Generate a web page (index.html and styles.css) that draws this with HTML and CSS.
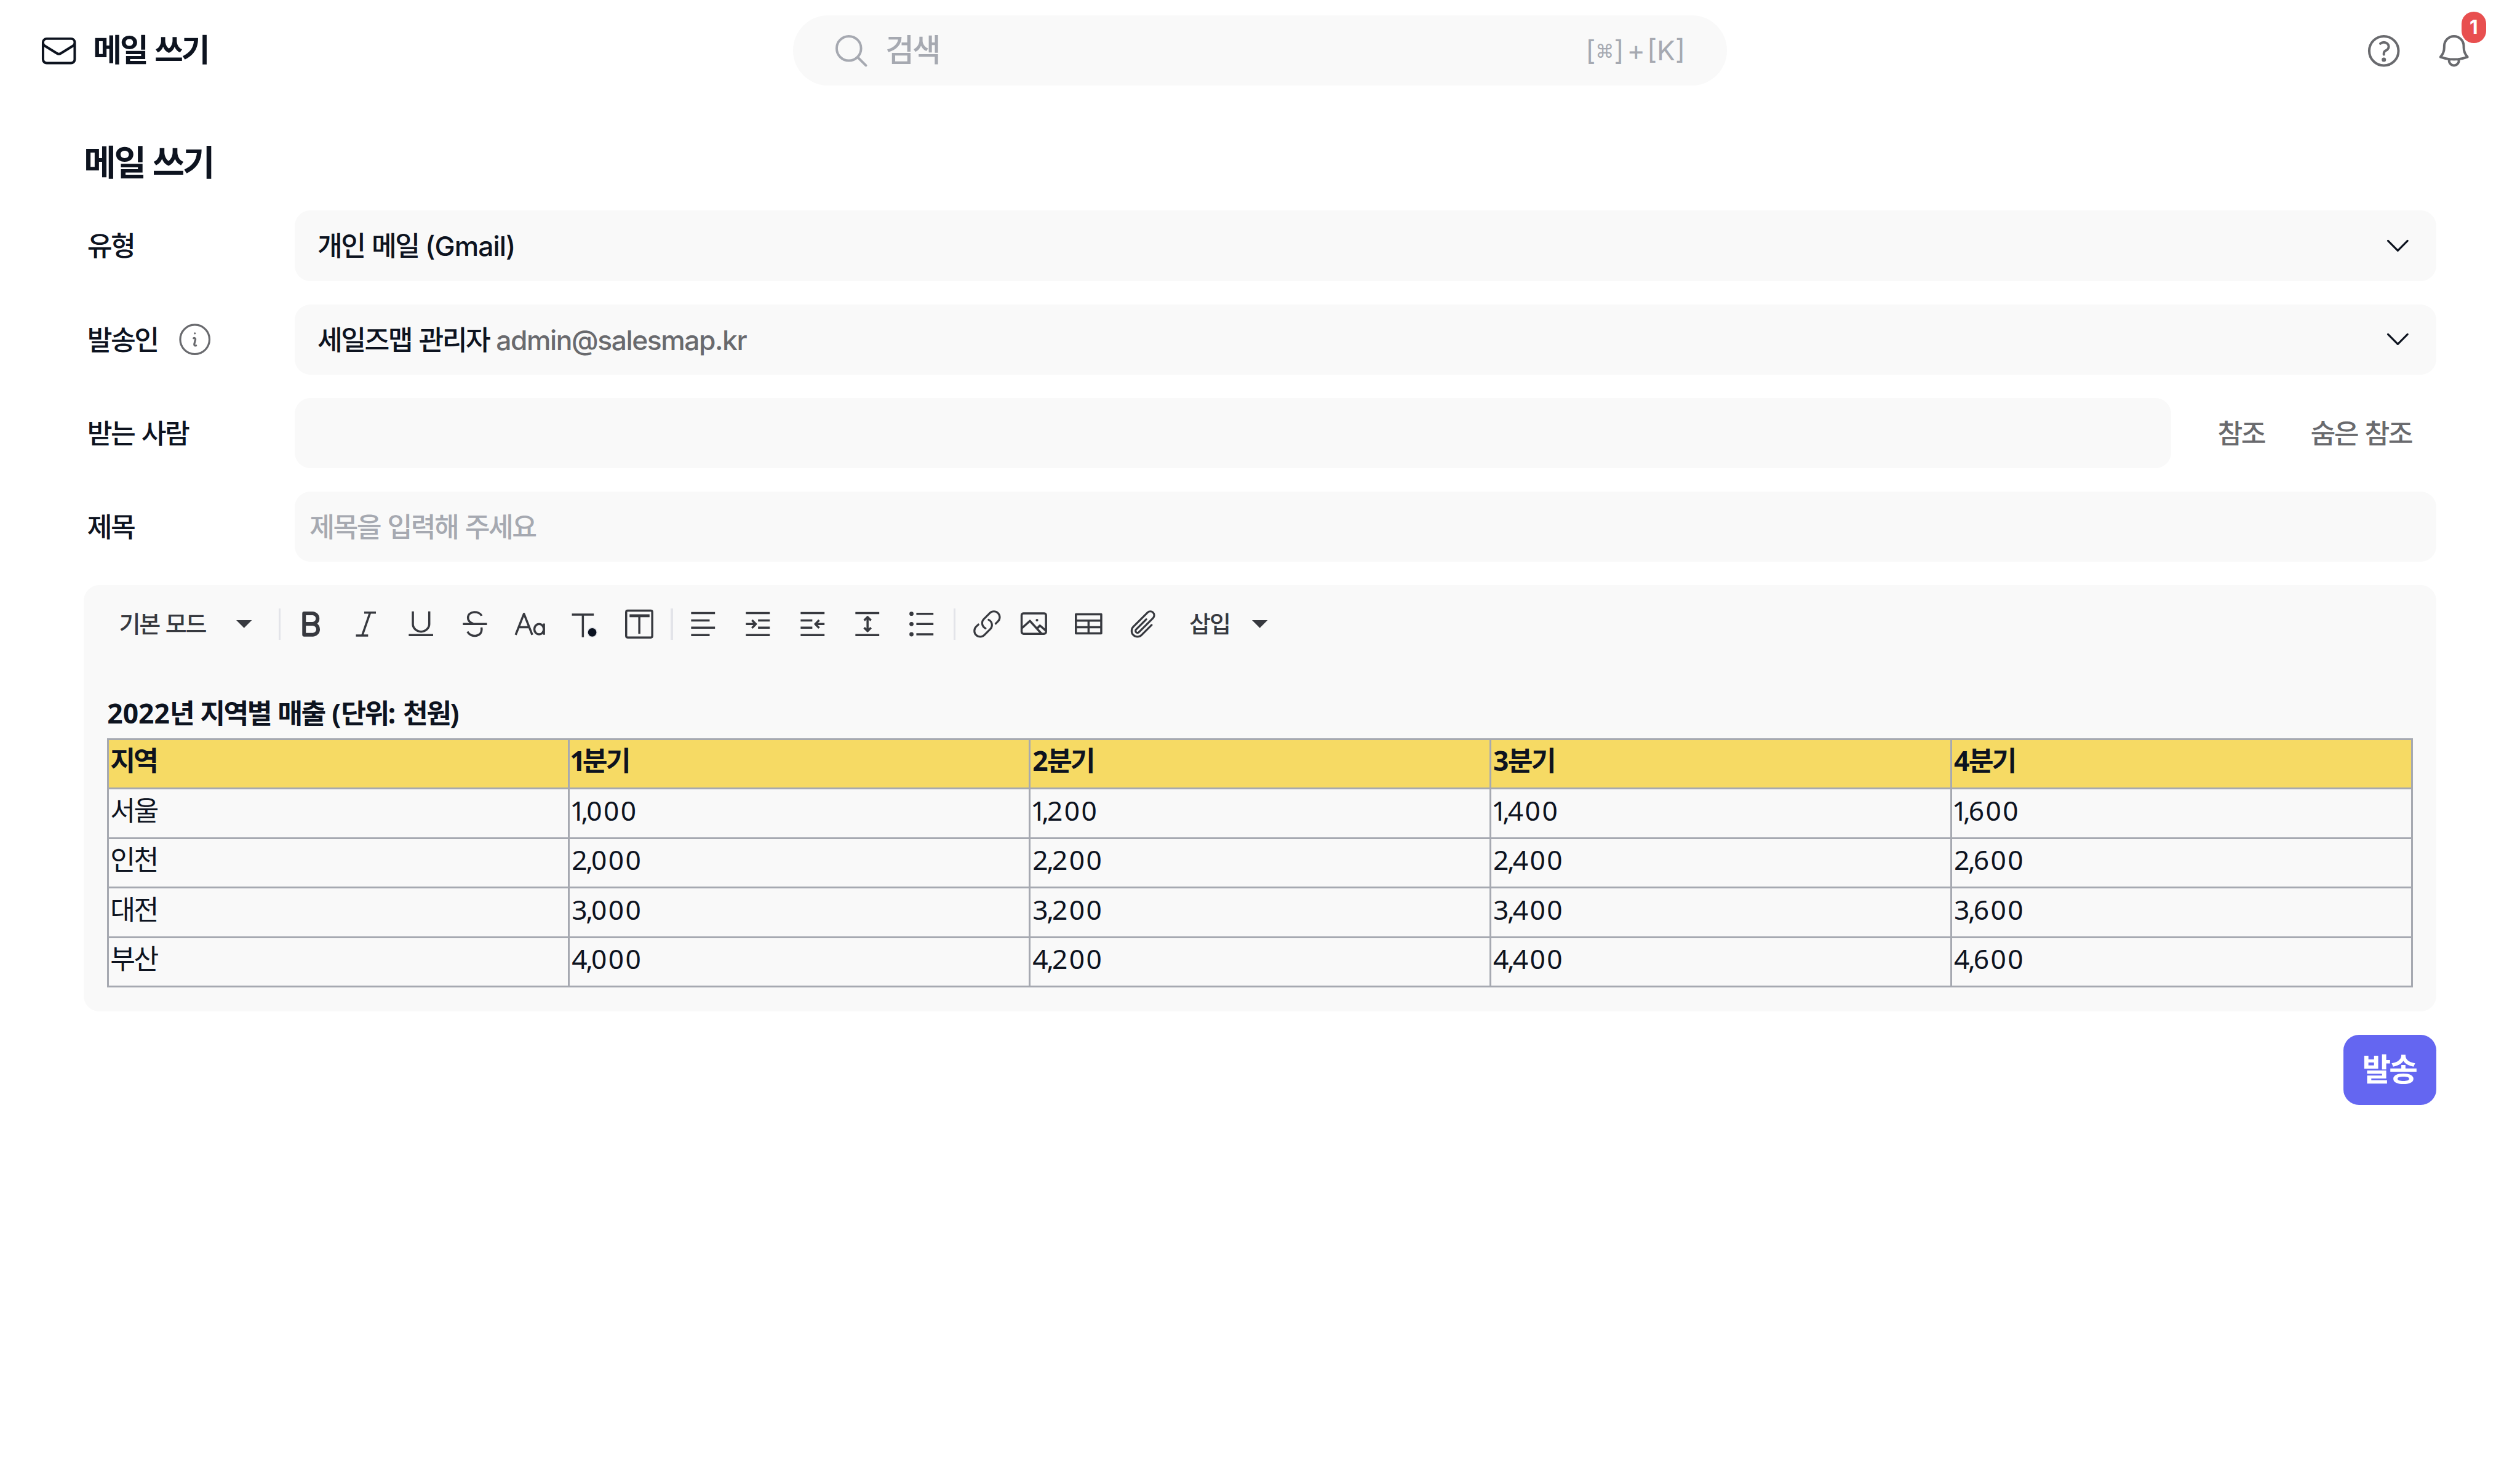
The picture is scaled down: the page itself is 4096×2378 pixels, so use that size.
FILE: index.html
```html
<!DOCTYPE html>
<html lang="ko">
<head>
<meta charset="utf-8">
<title>메일 쓰기</title>
<link rel="stylesheet" href="styles.css">
</head>
<body>
<header class="topbar">
  <div class="page-name">
    <svg class="icon-lg" viewBox="0 0 24 24"><path d="M21.75 6.75v10.5a2.25 2.25 0 0 1-2.25 2.25h-15a2.25 2.25 0 0 1-2.25-2.25V6.75m19.5 0A2.25 2.25 0 0 0 19.5 4.5h-15a2.25 2.25 0 0 0-2.25 2.25m19.5 0v.243a2.25 2.25 0 0 1-1.07 1.916l-7.5 4.615a2.25 2.25 0 0 1-2.36 0L3.32 8.91a2.25 2.25 0 0 1-1.07-1.916V6.75"/></svg>
    <span class="ko">메일 쓰기</span>
  </div>
  <div class="search">
    <svg class="icon-lg" viewBox="0 0 24 24"><path d="m21 21-5.197-5.197m0 0A7.5 7.5 0 1 0 5.196 5.196a7.5 7.5 0 0 0 10.607 10.607Z"/></svg>
    <span class="search-text ko">검색</span>
    <span class="shortcut">[<span class="cmd">⌘</span>]<span class="plus">+</span>[K]</span>
  </div>
  <div class="top-actions">
    <svg class="icon-lg" viewBox="0 0 24 24"><path d="M9.879 7.519c1.171-1.025 3.071-1.025 4.242 0 1.172 1.025 1.172 2.687 0 3.712-.203.179-.43.326-.67.442-.745.361-1.45.999-1.45 1.827v.75M21 12a9 9 0 1 1-18 0 9 9 0 0 1 18 0Z"/><circle class="fill" cx="12" cy="17.4" r="1.35"/></svg>
    <div class="bell">
      <svg class="icon-lg" viewBox="0 0 24 24"><path d="M14.857 17.082a23.848 23.848 0 0 0 5.454-1.31A8.967 8.967 0 0 1 18 9.75V9A6 6 0 0 0 6 9v.75a8.967 8.967 0 0 1-2.312 6.022c1.733.64 3.56 1.085 5.455 1.31m5.714 0a24.255 24.255 0 0 1-5.714 0m5.714 0a3 3 0 1 1-5.714 0"/></svg>
      <span class="badge">1</span>
    </div>
  </div>
</header>

<main class="compose">
  <h1 class="title ko">메일 쓰기</h1>
  <div class="rows">
    <div class="row">
      <div class="label ko">유형</div>
      <div class="field select">
        <span class="value"><span class="ko">개인 메일</span> <span class="kind">(Gmail)</span></span>
        <svg class="icon-sm" viewBox="0 0 24 24"><path d="m19.5 8.25-7.5 7.5-7.5-7.5"/></svg>
      </div>
    </div>
    <div class="row">
      <div class="label"><span class="ko">발송인</span>
        <svg class="icon-lg info" viewBox="0 0 24 24"><path d="m11.25 11.25.041-.02a.75.75 0 0 1 1.063.852l-.708 2.836a.75.75 0 0 0 1.063.853l.041-.021M21 12a9 9 0 1 1-18 0 9 9 0 0 1 18 0Zm-9-3.75h.008v.008H12V8.25Z"/></svg>
      </div>
      <div class="field select">
        <span class="value"><span class="ko">세일즈맵 관리자</span> <span class="email">admin@salesmap.kr</span></span>
        <svg class="icon-sm" viewBox="0 0 24 24"><path d="m19.5 8.25-7.5 7.5-7.5-7.5"/></svg>
      </div>
    </div>
    <div class="row">
      <div class="label ko">받는 사람</div>
      <div class="field"></div>
      <div class="cc ko"><span>참조</span><span>숨은 참조</span></div>
    </div>
    <div class="row">
      <div class="label ko">제목</div>
      <div class="field placeholder ko">제목을 입력해 주세요</div>
    </div>
  </div>

  <section class="editor">
    <div class="toolbar">
      <span class="mode ko">기본 모드</span>
      <svg class="caret" viewBox="0 0 32 16"><path d="M0 0h32L16 16z"/></svg>
      <i class="sep"></i>
      <div class="tools format">
        <svg viewBox="0 0 64 64"><path class="bold" d="M18 10h17a10.5 10.5 0 0 1 0 21.5H18zM18 31.500h17.500a11.200 11.200 0 0 1 0 22.500H18z"/></svg>
        <svg viewBox="0 0 64 64"><path d="M29 8.500h24M12 55.500h25M41 9L25 55"/></svg>
        <svg viewBox="0 0 64 64"><path d="M16.500 6v26a16.800 15.500 0 0 0 33.600 0V6M8 54.500h50"/></svg>
        <svg viewBox="0 0 64 64"><path d="M46.500 15C42 4.500 18.500 4.500 18.500 19c0 6 4 10 11 12.500M46 39c4.500 20-22.500 22-28.500 8.500M8 32h49.500"/></svg>
        <svg viewBox="0 0 64 64"><path d="M4 54l17-43 17 43M10.500 38.500h21M62 31v23"/><ellipse cx="52" cy="42.500" rx="9.700" ry="10.500"/></svg>
        <svg viewBox="0 0 64 64"><path d="M7 12.500h45M29.500 12.500V59"/><circle class="dot" cx="48.700" cy="49" r="9.700"/></svg>
        <svg viewBox="0 0 64 64"><rect x="6" y="4.500" width="53.500" height="55" rx="3"/><path d="M33 15v37"/><path class="thick" d="M13 15h41"/></svg>
      </div>
      <i class="sep"></i>
      <div class="tools format">
        <svg viewBox="0 0 64 64"><path d="M8 9.500h49M8 24.500h38M8 39.500h49M8 54.500h38"/></svg>
        <svg viewBox="0 0 64 64"><path d="M8 9.500h49M33 24.500h24M33 39.500h24M8 54.500h49M8 32h20M20.500 24l8 8-8 8"/></svg>
        <svg viewBox="0 0 64 64"><path d="M8 9.500h49M8 24.500h24M8 39.500h24M8 54.500h49M57 32H38M46 24l-8 8 8 8"/></svg>
        <svg viewBox="0 0 64 64"><path d="M8 9.500h49M8 54.500h49M33 19v26M26 24.500l7-7 7 7M26 39.500l7 7 7-7"/></svg>
        <svg viewBox="0 0 64 64"><path d="M22 11h35M22 32h35M22 53h35"/><g class="fill"><circle cx="12" cy="11" r="4.300"/><circle cx="12" cy="32" r="4.300"/><circle cx="12" cy="53" r="4.300"/></g></svg>
      </div>
      <i class="sep"></i>
      <div class="tools insert">
        <svg class="thin" viewBox="0 0 24 24"><path d="M13.190 8.688a4.500 4.500 0 0 1 1.242 7.244l-4.500 4.500a4.500 4.500 0 0 1-6.364-6.364l1.757-1.757m13.350-.622 1.757-1.757a4.500 4.500 0 0 0-6.364-6.364l-4.500 4.500a4.500 4.500 0 0 0 1.242 7.244"/></svg>
        <svg viewBox="0 0 64 64"><rect x="7" y="10" width="50" height="42" rx="4"/><path d="M8 40l16-14.500L48 52M39 41l5.500-6L56 45"/><circle class="fill" cx="38.500" cy="24" r="2.700"/></svg>
        <svg viewBox="0 0 64 64"><path d="M6 12h52v39H6zM6 25h52M6 38.500h52M32 25v26"/></svg>
        <svg class="thin" viewBox="0 0 24 24"><path d="m18.375 12.739-7.693 7.693a4.500 4.500 0 0 1-6.364-6.364l10.940-10.940A3 3 0 1 1 19.500 7.372L8.552 18.320m5.699-9.941-7.810 7.810a1.500 1.500 0 0 0 2.112 2.130"/></svg>
      </div>
      <span class="mode insert-label ko">삽입</span>
      <svg class="caret insert-caret" viewBox="0 0 32 16"><path d="M0 0h32L16 16z"/></svg>
    </div>
    <div class="body">
      <p class="caption">2022<span class="ko">년 지역별 매출</span> (<span class="ko">단위</span>: <span class="ko">천원</span>)</p>
      <table class="sales">
        <thead>
          <tr><th><span class="ko">지역</span></th><th><span class="one">1</span><span class="ko">분기</span></th><th>2<span class="ko">분기</span></th><th>3<span class="ko">분기</span></th><th>4<span class="ko">분기</span></th></tr>
        </thead>
        <tbody>
          <tr><td><span class="ko">서울</span></td><td><span class="k one">1</span><span class="c">,</span>000</td><td><span class="k one">1</span><span class="c">,</span>200</td><td><span class="k one">1</span><span class="c">,</span>400</td><td><span class="k one">1</span><span class="c">,</span>600</td></tr>
          <tr><td><span class="ko">인천</span></td><td><span class="k">2</span><span class="c">,</span>000</td><td><span class="k">2</span><span class="c">,</span>200</td><td><span class="k">2</span><span class="c">,</span>400</td><td><span class="k">2</span><span class="c">,</span>600</td></tr>
          <tr><td><span class="ko">대전</span></td><td><span class="k">3</span><span class="c">,</span>000</td><td><span class="k">3</span><span class="c">,</span>200</td><td><span class="k">3</span><span class="c">,</span>400</td><td><span class="k">3</span><span class="c">,</span>600</td></tr>
          <tr><td><span class="ko">부산</span></td><td><span class="k">4</span><span class="c">,</span>000</td><td><span class="k">4</span><span class="c">,</span>200</td><td><span class="k">4</span><span class="c">,</span>400</td><td><span class="k">4</span><span class="c">,</span>600</td></tr>
        </tbody>
      </table>
    </div>
  </section>
  <div class="footer"><button class="send ko">발송</button></div>
</main>
</body>
</html>
```
FILE: styles.css
```css
/* 1rem = 100 design units on a 5168-unit wide canvas */
html { font-size: 79.257px; }
* { box-sizing: border-box; margin: 0; padding: 0; }
body {
  background: #fff;
  color: #0d131f;
  font-family: Inter, "Noto Sans CJK KR", sans-serif;
  font-size: .56rem;
  font-weight: 500;
  line-height: 1;
  overflow: hidden;
}
.ko { letter-spacing: -.058em; word-spacing: .05em; white-space: nowrap; }
svg {
  display: block;
  flex: none;
  fill: none;
  stroke: currentColor;
  stroke-width: 1.5;
  stroke-linecap: round;
  stroke-linejoin: round;
  overflow: visible;
}
.icon-lg { width: .8rem; height: .8rem; }
.icon-sm { width: .64rem; height: .64rem; }
.fill { fill: currentColor; stroke: none; }

.topbar {
  display: grid;
  grid-template-columns: 1fr 19.16rem 1fr;
  align-items: center;
  height: 2.08rem;
  padding: 0 .95rem 0 .81rem;
}
.page-name {
  display: flex;
  align-items: center;
  gap: .3rem;
  font-size: .64rem;
  font-weight: 600;
}
.search {
  display: flex;
  align-items: center;
  height: 1.44rem;
  margin: 0 -.07rem 0 .07rem;
  padding: 0 .86rem 0 .8rem;
  border-radius: .72rem;
  background: #f9f9f9;
  color: #a6a9b1;
}
.search-text { flex: 1; margin-left: .3rem; font-size: .64rem; font-weight: 500; }
.shortcut { font-size: .56rem; font-weight: 400; }
.cmd { font-family: "DejaVu Sans", sans-serif; font-size: .38rem; vertical-align: .05rem; }
.plus { margin: 0 .04rem 0 .06rem; }
.top-actions {
  display: flex;
  justify-content: flex-end;
  gap: .64rem;
  color: #696a6e;
}
.bell { position: relative; }
.badge {
  position: absolute;
  left: .55rem;
  top: -.4rem;
  width: .5rem;
  height: .64rem;
  border-radius: .25rem;
  background: #e84f4f;
  color: #fff;
  font-size: .4rem;
  font-weight: 700;
  line-height: .62rem;
  text-align: center;
}

.compose { padding: 0 1.72rem; }
.title {
  height: 2.24rem;
  padding-top: .89rem;
  font-size: .72rem;
  font-weight: 700;
  line-height: .76rem;
}
.rows { display: grid; gap: .48rem; }
.row { display: flex; height: 1.44rem; }
.label {
  display: flex;
  align-items: center;
  width: 4.33rem;
  padding: .03rem 0 0 .07rem;
}
.info { margin: -.03rem 0 0 .36rem; color: #696a6e; stroke-width: 1.2; }
.field {
  flex: 1;
  display: flex;
  align-items: center;
  border-radius: .32rem;
  background: #f9f9f9;
}
.select { justify-content: space-between; padding: 0 .47rem 0 .46rem; }
.value { padding-top: .03rem; }
.kind { letter-spacing: -.012rem; margin-left: -.015rem; }
.email { color: #696a6e; letter-spacing: -.018rem; margin-left: -.01rem; }
.cc { display: flex; align-items: center; gap: .94rem; padding: .03rem .5rem 0 .95rem; color: #696a6e; }
.placeholder { padding: .03rem 0 0 .3rem; color: #a6a9b1; }

.editor {
  height: 8.74rem;
  margin-top: .48rem;
  border-radius: .32rem;
  background: #f9f9f9;
}
.toolbar {
  display: flex;
  align-items: center;
  height: 1.6rem;
  padding-left: .72rem;
  color: #37393f;
}
.mode { width: 2.4rem; font-size: .48rem; }
.caret { width: .32rem; height: .16rem; fill: currentColor; stroke: none; }
.sep { width: .04rem; height: .64rem; margin: 0 .3rem 0 .34rem; background: #e3e4e9; }
.caret + .sep { margin-left: .56rem; }
.tools { display: flex; gap: .48rem; }
.tools svg { width: .64rem; height: .64rem; stroke-width: 4.4; stroke-linecap: butt; }
.tools .thin { stroke-width: 1.5; stroke-linecap: round; }
.tools .bold { stroke-width: 7.5; }
.tools .thick { stroke-width: 6; }
.tools .fill { stroke: none; }
.tools .dot { fill: #0b1220; stroke: #e3e4e9; stroke-width: 2; }
.insert { margin-left: .03rem; }
.insert svg:first-child { margin-right: -.16rem; }
.insert-label { width: 1.285rem; margin-left: .625rem; }

.body { padding: .6rem .48rem 0; }
.caption { height: .94rem; font-family: "Noto Sans", "Noto Sans CJK KR", sans-serif; font-weight: 700; line-height: .86rem; }
.sales {
  width: 47.28rem;
  border-collapse: collapse;
  table-layout: fixed;
  font-family: "Noto Sans", "Noto Sans CJK KR", sans-serif;
  letter-spacing: .03rem;
}
.sales th, .sales td {
  height: 1.016rem;
  padding: 0 0 .12rem .04rem;
  border: .04rem solid #a6a9b1;
  text-align: left;
  font-weight: 400;
  line-height: .8rem;
}
.sales th { background: #f6da64; font-weight: 700; letter-spacing: -.02rem; }
.sales th .ko { letter-spacing: -.068em; }
.sales tr > :first-child .ko { margin-left: -.015rem; }
.k { letter-spacing: -.03rem; }
.c { letter-spacing: -.04rem; }
.sales td .one { letter-spacing: -.09rem; margin-left: -.04rem; }
.sales th .one { letter-spacing: -.06rem; margin-left: -.04rem; }

.footer { display: flex; justify-content: flex-end; margin-top: .48rem; }
.send {
  width: 1.9rem;
  height: 1.44rem;
  padding: .02rem .03rem 0 0;
  border: 0;
  border-radius: .32rem;
  background: #6466f1;
  color: #fff;
  font: 700 .64rem/1 Inter, "Noto Sans CJK KR", sans-serif;
}
```
